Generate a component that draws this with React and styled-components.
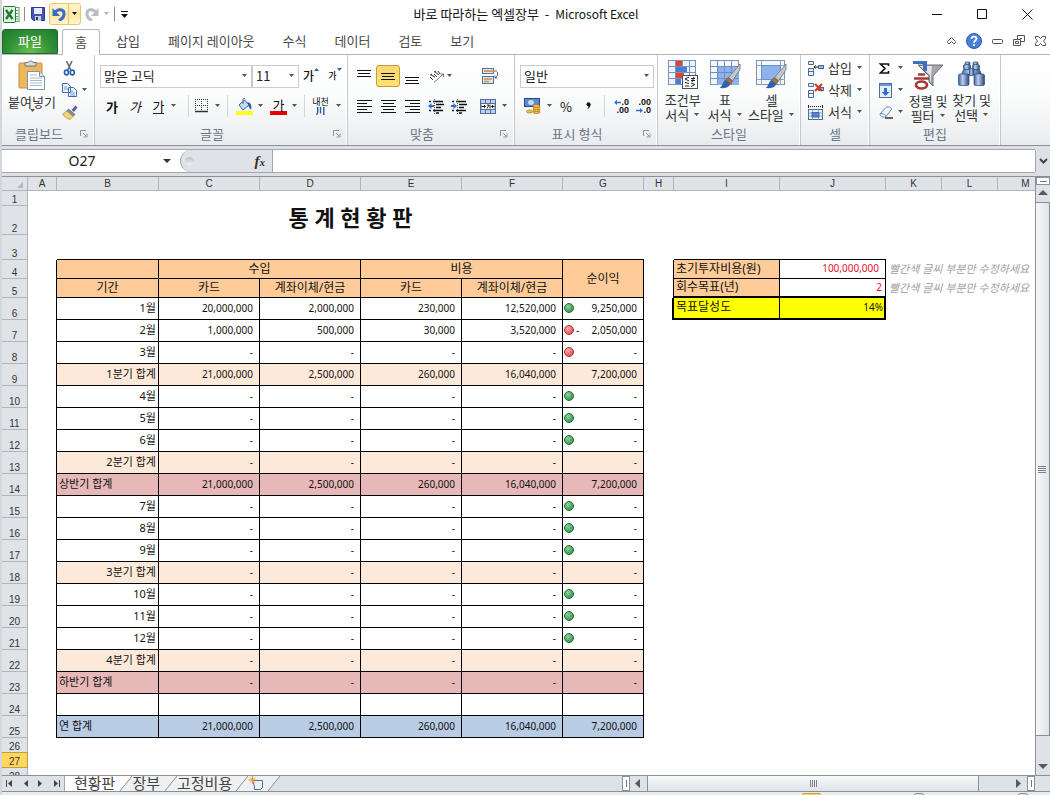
import React from "react";
import styled, { createGlobalStyle } from "styled-components";

const ui = `"Noto Sans CJK KR", "Noto Sans", sans-serif`;
const digits = `"Noto Sans", "Noto Sans CJK KR", sans-serif`;
const line = "#8b9097";
const headLine = "#b1b5ba";
const headFill = "#dfe3e8";
const orange = "#ffcc99";

const fills = {
  quarter: "#fde9d9",
  half: "#e6b8b7",
  year: "#b8cce4",
};

const GlobalStyle = createGlobalStyle`
  * {
    box-sizing: border-box;
  }

  body {
    margin: 0;
    background: #fff;
  }

  button, input, select {
    font: inherit;
    color: inherit;
    margin: 0;
    padding: 0;
    border: 0;
    background: none;
    outline: none;
  }

  svg {
    display: block;
    flex: none;
  }
`;

const Window = styled.div`
  height: 100vh;
  display: flex;
  flex-direction: column;
  overflow: hidden;
  border-left: 2px solid #d3d6db;
  font-family: ${ui};
  font-size: 13px;
  line-height: 16px;
  color: #333;
`;

/* Title bar */

const TitleBar = styled.header`
  display: grid;
  grid-template-columns: 1fr auto 1fr;
  align-items: center;
  height: 28px;
  flex: none;
`;

const Title = styled.h1`
  margin: 0;
  font-size: 13px;
  font-weight: 400;
  color: #111;
  white-space: pre;

  span {
    font-size: 12px;
  }
`;

const QuickAccess = styled.div`
  display: flex;
  align-items: center;
  gap: 4px;
  padding-left: 1px;
`;

const Divider = styled.span`
  width: 1px;
  height: 14px;
  margin-right: 2px;
  background: #8d8d8d;
`;

const PlainButton = styled.button`
  display: flex;
  align-items: center;
  gap: ${({ $gap }) => $gap || 0}px;
`;

const UndoButton = styled(PlainButton)`
  height: 22px;
  padding: 0 2px;
  border: 1px solid #e9c668;
  border-radius: 3px;
  background: linear-gradient(#fff4cf, #ffe9a3 60%, #fff6d6);
`;

const UndoSplit = styled.span`
  display: flex;
  align-items: center;
  height: 20px;
  padding-left: 2px;
  border-left: 1px solid #e9c668;
`;

const WindowButtons = styled.div`
  display: flex;
  justify-content: flex-end;

  button {
    display: flex;
    justify-content: center;
    width: 45px;
  }
`;

/* Ribbon tabs */

const TabRow = styled.nav`
  display: flex;
  height: 27px;
  flex: none;
  padding-top: 1px;
  border-bottom: 1px solid #b5b9bf;
`;

const FileTab = styled.button`
  width: 56px;
  margin-right: 4px;
  padding-bottom: 2px;
  border: 1px solid #1d6b28;
  border-radius: 3px 3px 0 0;
  background: radial-gradient(ellipse at 50% 100%, #6cc04f, #2f8f35 60%, #1f7a2d);
  color: #fff;
`;

const Tab = styled.button`
  padding: 0 14px 2px;
  color: #4a4a4a;
`;

const HomeTab = styled(Tab)`
  width: 38px;
  height: 26px;
  padding: 0 0 2px;
  border: 1px solid #b5b9bf;
  border-bottom: 0;
  border-radius: 3px 3px 0 0;
  background: #fff;
  margin: 0 2px -1px 0;
`;

const TabTools = styled.div`
  display: flex;
  align-items: center;
  gap: 10px;
  margin-left: auto;
  padding: 0 4px 2px 0;
`;

/* Ribbon */

const Ribbon = styled.div`
  display: flex;
  height: 90px;
  flex: none;
  background: linear-gradient(#fff, #fbfcfc 45%, #e9ecef);
`;

const Group = styled.section`
  display: flex;
  flex-direction: column;
  width: ${({ $w }) => $w}px;
  flex: none;
  border-right: 1px solid #c4c8cd;
  box-shadow: inset -1px 0 #fff;
`;

const GroupBody = styled.div`
  display: flex;
  flex: 1;
  padding: 0 ${({ $pad }) => $pad}px;
`;

const GroupLabel = styled.div`
  display: flex;
  align-items: center;
  gap: 10px;
  height: 20px;
  padding: 0 6px 2px;
  color: #6b7785;

  span {
    flex: 1;
    text-align: center;
  }
`;

const Rows = styled.div`
  display: flex;
  flex-direction: column;
  justify-content: center;
  gap: 8px;
  padding-top: 2px;
`;

const Row = styled.div`
  display: flex;
  align-items: center;
  height: 22px;
`;

const Tool = styled.button`
  display: flex;
  align-items: center;
  justify-content: center;
  gap: ${({ $gap }) => $gap || 5}px;
  width: ${({ $w }) => $w || 24}px;
  height: 22px;
  color: #111;
  ${({ $on }) =>
    $on &&
    `border: 1px solid #c79a3c; border-radius: 3px; background: linear-gradient(#fdd774, #ffe271);`}
`;

const Sep = styled.span`
  width: 1px;
  height: ${({ $tall }) => ($tall ? 52 : 22)}px;
  margin: 0 4px;
  align-self: center;
  background: #d3d7db;
`;

const Glyph = styled.span`
  font-size: 13px;
  line-height: 15px;
  font-weight: ${({ $bold }) => ($bold ? 700 : 400)};
  font-style: ${({ $italic }) => ($italic ? "italic" : "normal")};
  border-bottom: ${({ $under }) => ($under ? "1px solid #222" : "0")};
`;

const ColorGlyph = styled.span`
  width: 17px;
  font-size: 13px;
  line-height: 13px;
  border-bottom: 4px solid #e80000;
`;

const Hanja = styled.span`
  display: flex;
  flex-direction: column;
  align-items: center;
  font-size: 9px;
  line-height: 8px;
`;

const SizeGlyph = styled.span`
  display: flex;
  align-items: ${({ $small }) => ($small ? "center" : "flex-end")};
  font-size: ${({ $small }) => ($small ? 9 : 12)}px;
  font-weight: 500;

  svg {
    align-self: flex-start;
  }
`;

const Combo = styled.label`
  display: grid;
  align-items: center;
  width: ${({ $w }) => $w}px;
  height: 23px;
  border: 1px solid #c8ccd1;
  background: #fff;
  color: #222;

  select {
    grid-area: 1 / 1;
    appearance: none;
    width: 100%;
    height: 21px;
    padding-left: 3px;
    line-height: 20px;
  }

  svg {
    grid-area: 1 / 1;
    justify-self: end;
    margin-right: 3px;
    pointer-events: none;
  }
`;

const BigButton = styled.button`
  display: flex;
  flex-direction: column;
  align-items: center;
  width: ${({ $w }) => $w}px;
  padding-top: 5px;
  white-space: nowrap;
  line-height: 15px;

  svg + span {
    margin-top: 3px;
  }
`;

const WithArrow = styled.span`
  display: flex;
  align-items: center;
  gap: 4px;
`;

const SmallStack = styled.div`
  display: flex;
  flex-direction: column;
  padding: 2px 0 0 ${({ $l }) => $l || 0}px;
`;

const SmallButton = styled.button`
  display: flex;
  align-items: center;
  gap: ${({ $gap }) => $gap || 5}px;
  height: 22px;
  white-space: nowrap;
`;

/* Formula bar */

const FormulaBar = styled.div`
  display: flex;
  height: 32px;
  flex: none;
  padding: 4px 0 4px;
  border-top: 1px solid ${line};
  border-bottom: 1px solid ${line};
  background: #dde1e6;
`;

const NameBox = styled.div`
  display: flex;
  align-items: center;
  width: 178px;
  background: #fff;
  box-shadow: 0 -1px #a3a7ad, 0 1px #a3a7ad;

  input {
    width: 160px;
    text-align: center;
    font-family: ${digits};
    font-size: 14px;
    color: #222;
  }
`;

const FxBox = styled.div`
  display: flex;
  background: #fff;
  box-shadow: 0 -1px #a3a7ad, 0 1px #a3a7ad;
`;

const FxPill = styled.div`
  display: flex;
  align-items: center;
  justify-content: space-between;
  width: 93px;
  padding: 0 7px 0 4px;
  border: 1px solid #a3a7ad;
  border-width: 0 1px;
  border-radius: 12px 0 0 12px;
  background: #dfe2e6;

  button {
    font: italic bold 15px "Liberation Serif", serif;
    color: #333;
  }

  small {
    font-size: 11px;
  }
`;

const Knob = styled.i`
  width: 9px;
  height: 8px;
  border-radius: 50%;
  background: linear-gradient(#b9bec6, #f2f4f6);
`;

const FormulaInput = styled.input`
  flex: 1;
  min-width: 0;
  background: #fff !important;
  box-shadow: 0 -1px #a3a7ad, 0 1px #a3a7ad;
`;

const Expand = styled.button`
  display: flex;
  align-items: center;
  justify-content: center;
  width: 15px;
  border-left: 1px solid #a3a7ad;
`;

/* Sheet */

const Main = styled.main`
  display: flex;
  flex: 1;
  min-height: 0;
`;

const SheetPane = styled.div`
  flex: 1;
  min-width: 0;
  overflow: hidden;
  background: linear-gradient(to right, ${headFill} 26px, #fff 26px);
`;

const Sheet = styled.table`
  table-layout: fixed;
  width: 100%;
  border-collapse: separate;
  border-spacing: 0;
  font-family: ${digits};
  font-size: 10px;
  line-height: 14px;
  color: #111;
`;

const HeadCell = styled.th`
  height: 14px;
  padding: 0;
  border-right: 1px solid ${headLine};
  border-bottom: 1px solid ${headLine};
  background: ${headFill};
  font: 10px "Liberation Sans", sans-serif;
  line-height: 13px;
  color: #333;
`;

const Corner = styled(HeadCell)`
  svg {
    margin: 2px 4px 0 auto;
  }
`;

const RowHead = styled(HeadCell)`
  height: auto;
  vertical-align: bottom;
  line-height: 10px;
  ${({ $on }) =>
    $on && `background: #ffd75e; border-color: #c79a3c; box-shadow: 0 -1px #c79a3c;`}
`;

const Cell = styled.td`
  padding: 0 ${({ $pad }) => ($pad === undefined ? 6 : $pad)}px 2px;
  text-align: ${({ $align }) => $align || "right"};
  background: ${({ $fill }) => $fill || "#fff"};
  border: 0 solid #000;
  border-right-width: ${({ $right }) => $right || 0}px;
  border-bottom-width: ${({ $bottom }) => $bottom || 0}px;
  color: ${({ $red }) => ($red ? "#e8112d" : "inherit")};
  font-size: ${({ $size }) => $size || 10}px;
  white-space: nowrap;
`;

const BoxCell = styled(Cell).attrs({ $right: 1, $bottom: 1 })``;

const HeaderCell = styled(BoxCell)`
  padding-bottom: 0;
`;

const SheetTitle = styled(Cell)`
  font-size: 22px;
  font-weight: 700;
  line-height: 20px;
  padding-bottom: 8px;
`;

const Note = styled(Cell)`
  font-size: 11px;
  font-style: italic;
  color: #a0a0a0;
`;

const Profit = styled.div`
  display: flex;
  align-items: center;
  gap: 2px;
`;

const ProfitValue = styled.span`
  margin-left: auto;
  padding-right: 5px;
`;

const Dot = styled.i`
  width: 10px;
  height: 10px;
  border-radius: 50%;
  border: 1px solid ${({ $c }) => ($c === "red" ? "#a8323a" : "#1f6b35")};
  background: ${({ $c }) =>
    $c === "red"
      ? "radial-gradient(circle at 35% 30%, #ffb3b3, #e8585c 70%)"
      : "radial-gradient(circle at 35% 30%, #8fd3a0, #3f9e57 70%)"};
`;

/* Scroll bars and sheet tabs */

const VScroll = styled.div`
  display: flex;
  flex-direction: column;
  align-items: center;
  width: 15px;
  flex: none;
  border-left: 1px solid ${line};
  background: ${headFill};
`;

const SplitHandle = styled.i`
  flex: none;
  width: ${({ $v }) => ($v ? 8 : 14)}px;
  height: ${({ $v }) => ($v ? 15 : 8)}px;
  display: flex;
  align-items: center;
  justify-content: center;
  border: 1px solid ${line};
  background: #fff;

  &::after {
    content: "";
    width: ${({ $v }) => ($v ? 1 : 7)}px;
    height: ${({ $v }) => ($v ? 7 : 1)}px;
    background: #777;
  }
`;

const ScrollArrow = styled.button`
  display: flex;
  align-items: center;
  justify-content: center;
  width: 16px;
  height: ${({ $h }) => $h || 15}px;
`;

const VThumb = styled.div`
  display: flex;
  align-items: center;
  justify-content: center;
  flex: 1;
  width: 14px;
  margin-bottom: 22px;
  border: 1px solid ${line};
  border-left: 0;
  background: linear-gradient(to right, #f7f9fa, #dfe3e8);
`;

const BottomBar = styled.div`
  display: flex;
  height: 17px;
  flex: none;
  border-top: 1px solid ${line};
  border-bottom: 1px solid ${line};
  background: #dde2e6;
`;

const SheetNav = styled.div`
  display: flex;
  align-items: center;
  justify-content: space-around;
  width: 63px;
  border-right: 1px solid #a3a7ad;
`;

const SheetTab = styled.button`
  height: 15px;
  padding: 0 ${({ $r }) => $r || 0}px 2px ${({ $l }) => $l || 0}px;
  font-size: 15px;
  line-height: 13px;
  color: #444;
  background: ${({ $on }) => ($on ? "#fff" : "#eef0f2")};
`;

const HScroll = styled.div`
  display: flex;
  align-items: center;
  width: 413px;
  margin-left: auto;
`;

const HThumb = styled.div`
  display: flex;
  align-items: center;
  justify-content: center;
  flex: 1;
  height: 15px;
  margin: 0 32px 0 1px;
  border: 1px solid ${line};
  border-width: 0 1px;
  background: linear-gradient(#f7f9fa, #dfe3e8);
`;

const BottomCorner = styled.div`
  width: 15px;
  flex: none;
`;

const Status = styled.footer`
  display: flex;
  justify-content: flex-end;
  gap: 92px;
  height: 3px;
  flex: none;
  padding: 1px 21px 0;
  background: #e9ecef;
  overflow: hidden;
`;

const ViewMark = styled.i`
  width: ${({ $w }) => $w}px;
  height: 8px;
  border: 1px solid ${({ $on }) => ($on ? "#c79a3c" : "#7d8aa0")};
  border-radius: ${({ $on }) => ($on ? 2 : 8)}px;
  background: ${({ $on }) => ($on ? "#ffd75e" : "#dfe3e8")};
`;

/* Icons */

const Down = ({ c = "#555" }) => (
  <svg width="7" height="4" viewBox="0 0 7 4">
    <path d="M1 0h5L3.500 3z" fill={c} />
  </svg>
);

const Launcher = () => (
  <svg width="8" height="8" viewBox="0 0 8 8" fill="none" stroke="#8d949c">
    <path d="M.5 6V.5H6M3 3l3 3M7 3.500V7H3.500" />
  </svg>
);

const ExcelLogo = () => (
  <svg width="17" height="17" viewBox="0 0 17 17">
    <rect x="7" y="1.500" width="9" height="14" fill="#fff" stroke="#58a065" />
    <path d="M12 4.500h3M12 7.500h3M12 10.500h3M12 13h3" stroke="#58a065" />
    <rect x=".5" y=".5" width="12" height="16" rx="1" fill="#dff0dc" stroke="#1f7a35" />
    <path d="M3 4l6.500 9M9.500 4L3 13" stroke="#1f7a35" strokeWidth="2.400" />
  </svg>
);

const SaveIcon = () => (
  <svg width="14" height="14" viewBox="0 0 14 14">
    <path d="M.5.5h13v13h-11l-2-2z" fill="#4a55b5" stroke="#2f3a8c" />
    <rect x="3" y="1" width="8" height="6" fill="#e7edf8" />
    <rect x="4" y="9" width="6" height="5" fill="#c9cfe8" />
    <rect x="5" y="10" width="2" height="3" fill="#26307a" />
  </svg>
);

const CurlIcon = ({ c, flip }) => (
  <svg width="14" height="14" viewBox="0 0 14 14">
    <g transform={flip ? "translate(14 0) scale(-1 1)" : undefined}>
      <path d="M3 5.500C6 1 12.500 2 12 7.500 11.800 10 10 12 7 13.500" fill="none" stroke={c} strokeWidth="3" />
      <path d="M.5 1v8h7.500z" fill={c} />
    </g>
  </svg>
);

const PasteIcon = () => (
  <svg width="28" height="31" viewBox="0 0 28 31">
    <rect x="1" y="3" width="23" height="25" rx="1" fill="#eeb75d" stroke="#c98f3c" />
    <path d="M7 2.500h3C10 .5 15 .5 15 2.500h3V6H7z" fill="#d9dce0" stroke="#6f757c" />
    <path d="M9.500 11.500h12l5 5v13h-17z" fill="#fdfeff" stroke="#7f93ad" />
    <path d="M21.500 11.500v5h5" fill="#dbe5f1" stroke="#7f93ad" />
    <path d="M12 15h7M12 18h12M12 20.500h12M12 23h12M12 25.500h12" stroke="#a9bad1" />
  </svg>
);

const CutIcon = () => (
  <svg width="15" height="15" viewBox="0 0 15 15" fill="none">
    <path d="M4.500 0l4.500 9.500M10 0L5.500 9.500" stroke="#56677c" strokeWidth="1.500" />
    <ellipse cx="4.500" cy="11.500" rx="2" ry="2.300" stroke="#2b63b5" strokeWidth="1.700" />
    <ellipse cx="10.300" cy="11.500" rx="2" ry="2.300" stroke="#2b63b5" strokeWidth="1.700" />
  </svg>
);

const CopyIcon = () => (
  <svg width="15" height="14" viewBox="0 0 15 14" fill="#f2f7fd" stroke="#3b6cb0">
    <path d="M.5.5h5l3 3v6h-8zM6.500 4.500h5l3 3v6h-8z" />
    <path d="M2 4h3M2 6h4M8 8h3M8 10h5M8 12h5" stroke="#6d97d0" />
  </svg>
);

const BrushIcon = () => (
  <svg width="16" height="15" viewBox="0 0 16 15">
    <path d="M9.500 5l4-4.500L15.500 2.500 12 7z" fill="#5a5fa3" />
    <path d="M6.500 4l6.500 5.500-2 2-6.500-5z" fill="#8a8d98" stroke="#555" strokeWidth=".6" />
    <path d="M5 6l6 5.500-3 3C5 13.500 2 11.500.5 9z" fill="#f3d479" stroke="#a98335" strokeWidth=".7" />
  </svg>
);

const BordersIcon = () => (
  <svg width="14" height="14" viewBox="0 0 14 14" stroke="#333">
    <path d="M0 .5h13M0 6.500h13M.5 0v12M6.500 0v12M12.500 0v12" strokeDasharray="1 1" />
    <path d="M0 12.500h13" strokeWidth="1.500" />
  </svg>
);

const FillIcon = () => (
  <svg width="17" height="17" viewBox="0 0 17 17">
    <path d="M3 7l5.500-5L13 7l-6 5z" fill="#c9dbf3" stroke="#3c62a0" />
    <path d="M7 6V1.500C7 0 9 0 9 1.500" fill="none" stroke="#4a6a96" />
    <path d="M11 4c4 .5 5 3 4.200 7.500C13.500 11 12.500 9 12.500 7z" fill="#2b63b5" />
    <rect y="13" width="17" height="4" fill="#ffff1a" />
  </svg>
);

const lineSets = {
  top: [[0, 14], [1, 12], [0, 14]],
  left: [[0, 15], [0, 10], [0, 15], [0, 10], [0, 15]],
  center: [[0, 15], [2, 11], [0, 15], [2, 11], [0, 15]],
  right: [[0, 15], [5, 10], [0, 15], [5, 10], [0, 15]],
};

const Lines = ({ set, y = 0 }) => (
  <svg width="15" height="15" viewBox="0 0 15 15">
    {lineSets[set].map(([x, w], i) => (
      <rect key={i} x={x} y={y + i * 3} width={w} height="1" fill="#111" />
    ))}
  </svg>
);

const IndentIcon = ({ out }) => (
  <svg width="16" height="15" viewBox="0 0 16 15">
    <path d="M1 2.500h2M5 2.500h10M8 5.500h8M8 8.500h5M1 11.500h2M5 11.500h10M8 14h3" stroke="#111" strokeWidth="1.300" />
    <path d="M6.500 0v15" stroke="#555" strokeDasharray="1 1" />
    {out ? (
      <path d="M0 7l3.500-3v2H6v2H3.500v2z" fill="#2f6fd0" />
    ) : (
      <path d="M6 7L2.500 4v2H0v2h2.500v2z" fill="#2f6fd0" />
    )}
  </svg>
);

const OrientIcon = () => (
  <svg width="16" height="14" viewBox="0 0 16 14" fill="none" stroke="#333">
    <path d="M1 8l3 3M2 6l4 2M5 5l3 3M6 3l4 3M9 2l2 3M1 6l2-1M5 3l2-1" />
    <path d="M5 13.500L14.500 5M11.500 5h3v3" stroke="#777" />
  </svg>
);

const WrapIcon = () => (
  <svg width="17" height="16" viewBox="0 0 17 16" fill="none">
    <rect x=".5" y=".5" width="11" height="5" fill="#dfe9f6" stroke="#51719c" />
    <path d="M2 3h13" stroke="#c98b3c" strokeWidth="1.500" />
    <rect x=".5" y="8.500" width="11" height="7" fill="#dfe9f6" stroke="#51719c" />
    <path d="M2 11h8M2 13.500h5" stroke="#c98b3c" strokeWidth="1.500" />
    <path d="M15.500 4v3.500L13 10M13 7.500V10h2.500" stroke="#3b6cb0" />
  </svg>
);

const MergeIcon = () => (
  <svg width="16" height="15" viewBox="0 0 16 15" fill="none">
    <rect x=".5" y=".5" width="15" height="14" fill="#bcd0ec" stroke="#51719c" />
    <path d="M5.500.5v4M10.500.5v4M5.500 10.500v4M10.500 10.500v4" stroke="#51719c" />
    <rect x="1" y="4.500" width="14" height="6" fill="#fff" stroke="#51719c" />
    <path d="M1.500 7.500h4M4 6l1.500 1.500L4 9M14.500 7.500h-3M13 6l-1.500 1.500L13 9M7 6h2L7 9.500M10 5.500v4" stroke="#222" />
  </svg>
);

const MoneyIcon = () => (
  <svg width="17" height="16" viewBox="0 0 17 16">
    <rect x=".5" y=".5" width="15" height="8" fill="#5b8ad0" stroke="#23477f" />
    <ellipse cx="7" cy="4.500" rx="3" ry="2.500" fill="#c6daf5" />
    <g fill="#f5c04a" stroke="#a87416" strokeWidth=".7">
      <ellipse cx="12.500" cy="14" rx="3.500" ry="1.500" />
      <ellipse cx="12.500" cy="12" rx="3.500" ry="1.500" />
      <ellipse cx="12.500" cy="10" rx="3.500" ry="1.500" />
      <ellipse cx="12.500" cy="8" rx="3.500" ry="1.500" />
      <ellipse cx="5.500" cy="13.500" rx="3" ry="1.500" />
    </g>
  </svg>
);

const Decimals = styled.span`
  display: flex;
  flex-direction: column;
  font: bold 9px "Liberation Sans", sans-serif;
  line-height: 8px;

  span {
    display: flex;
    align-items: center;
    justify-content: flex-end;
    width: 16px;
  }
`;

const TinyArrow = ({ right }) => (
  <svg width="7" height="5" viewBox="0 0 7 5" fill="#2f6fd0">
    {right ? <path d="M7 2.500L4 0v1.700H0v1.600h4V5z" /> : <path d="M0 2.500L3 0v1.700h4v1.600H3V5z" />}
  </svg>
);

const Brush = () => (
  <g>
    <path d="M31 4L19.500 17.500l4 3.500L31 9.500z" fill="#c3c8ce" stroke="#6b7076" strokeWidth=".8" />
    <path d="M19.500 17.500l4 3.500-2 3-5-4z" fill="#a8743d" stroke="#6e4a22" strokeWidth=".6" />
    <path d="M16.500 20l5 4c-2 4-6 4.500-11 4 3-1.500 3.500-7 6-8z" fill="#2f62ae" />
  </g>
);

const CondIcon = () => (
  <svg width="31" height="29" viewBox="0 0 31 29">
    <rect x="1.500" y=".5" width="27" height="24" fill="#eef4fc" stroke="#7d93b8" />
    <path d="M8.500 1v24M15.500 1v24M22.500 1v24M2 6.500h26M2 12.500h26M2 18.500h26" stroke="#7d93b8" />
    <rect x="9" y="1" width="6" height="5" fill="#e0452b" />
    <rect x="9" y="7" width="11" height="5" fill="#4a7bd6" />
    <rect x="9" y="13" width="8" height="5" fill="#e0452b" />
    <rect x="9" y="19" width="5" height="5" fill="#4a7bd6" />
    <rect x="15.500" y="15.500" width="15" height="13" fill="#fff" stroke="#44546a" />
    <path d="M22 17l-4 2 4 2M18 22.500l4 1M24 18.500h4M24 20.500h4M27 17l-2 5M24 23l4 1.500-4 2M18 26h4" fill="none" stroke="#222" />
  </svg>
);

const TableIcon = () => (
  <svg width="32" height="29" viewBox="0 0 32 29">
    <rect x="1.500" y=".5" width="28" height="24" fill="#f4f8fd" stroke="#7d93b8" />
    <rect x="8" y="7" width="22" height="18" fill="#8db2ec" />
    <path d="M8.500 1v24M15.500 1v24M22.500 1v24M2 6.500h28M2 12.500h28M2 18.500h28" stroke="#6f8fc4" />
    <Brush />
  </svg>
);

const CellStyleIcon = () => (
  <svg width="32" height="29" viewBox="0 0 32 29">
    <rect x="1.500" y=".5" width="28" height="24" fill="#f4f8fd" stroke="#7d93b8" />
    <path d="M6.500 1v24M25.500 1v24M2 5.500h28M2 19.500h28" stroke="#8fa9d2" />
    <rect x="6.500" y="5.500" width="19" height="14" fill="#8db2ec" stroke="#6f8fc4" />
    <Brush />
  </svg>
);

const CellsIcon = ({ kind }) => (
  <svg width="17" height="15" viewBox="0 0 17 15" fill="none" stroke="#4a6a96">
    {kind === "format" ? (
      <>
        <rect x="1.500" y="4.500" width="14" height="10" fill="#eef4fc" />
        <path d="M1.500 8h14M1.500 11h14M5.500 4.500v10M11.500 4.500v10" stroke="#8fa9d2" />
        <rect x="5" y="7.500" width="7" height="4.500" fill="#5583d4" />
        <path d="M1 1.500h15M1.500 0v3M15.500 0v3" stroke="#222" strokeDasharray="1 1" />
      </>
    ) : (
      <>
        <path d="M1.500.5h5v3h-5zM1.500 7.500h5v3h-5zM1.500 10.500h5v4h-5z" fill="#eef4fc" />
        <rect x="11.500" y="4.500" width="5" height="3" fill="#9dbbe8" />
        {kind === "insert" ? (
          <path d="M11 6H7M8.500 4.500L7 6l1.500 1.500" stroke="#111" />
        ) : (
          <path d="M8 1l7 7M15 1L8 8" stroke="#d8341f" strokeWidth="2" />
        )}
      </>
    )}
  </svg>
);

const SigmaIcon = () => (
  <svg width="11" height="11" viewBox="0 0 11 11">
    <path d="M9.500 3V1H1.500L6 5.500 1.500 10h8V8" fill="none" stroke="#111" strokeWidth="1.600" />
  </svg>
);

const FillDownIcon = () => (
  <svg width="13" height="15" viewBox="0 0 13 15">
    <rect x=".5" y=".5" width="12" height="14" fill="#e6effb" stroke="#4a6fa8" />
    <rect x="1" y="1" width="11" height="2" fill="#6e96d6" />
    <path d="M5 5h3v4h2.500l-4 4-4-4H5z" fill="#2f6fd0" />
  </svg>
);

const EraserIcon = () => (
  <svg width="14" height="13" viewBox="0 0 14 13">
    <path d="M1 8l6-6.500c2-1.500 6 0 5.500 2L7 10.500c-2 1.500-6 0-6-2.500z" fill="#f1f5fb" stroke="#6c85ad" />
    <path d="M1 8c1.500-1 4.500-.5 6 2.500" fill="none" stroke="#6c85ad" />
    <path d="M6 12h8" stroke="#111" strokeWidth="1.300" />
  </svg>
);

const SortIcon = () => (
  <svg width="32" height="30" viewBox="0 0 32 30">
    <path d="M6 5h25L21 16v10l-4-4v-6z" fill="#a3a6aa" stroke="#6b6e72" />
    <path d="M8 6h12l-1 10v6l-1-1v-6z" fill="#e2e4e6" />
    <path d="M1 1h14v10h-4V4H1z" fill="#3f6fc4" />
    <path d="M6 14.500h7M2 18.500h15" stroke="#a33a3a" strokeWidth="2.400" />
    <ellipse cx="9.500" cy="25" rx="5.500" ry="3.500" fill="none" stroke="#a33a3a" strokeWidth="2.600" />
  </svg>
);

const FindIcon = () => (
  <svg width="29" height="29" viewBox="0 0 29 29">
    <defs>
      <linearGradient id="tube">
        <stop offset="0" stopColor="#365f9e" />
        <stop offset=".4" stopColor="#bcd1ef" />
        <stop offset="1" stopColor="#26467c" />
      </linearGradient>
    </defs>
    <g fill="url(#tube)" stroke="#2f4f82" strokeWidth=".7">
      <rect x="8" y="2" width="5" height="3" rx="1" />
      <rect x="16" y="2" width="5" height="3" rx="1" />
      <rect x="6.500" y="4.500" width="7" height="5" rx="1.500" />
      <rect x="15.500" y="4.500" width="7" height="5" rx="1.500" />
      <path d="M6.500 9.500h6.500v5H4.500zM16 9.500h6.500l2 5H16z" />
      <rect x="12.500" y="8.500" width="4" height="7" />
      <rect x="1.500" y="14" width="10.500" height="11.500" rx="1.500" />
      <rect x="17" y="14" width="10.500" height="11.500" rx="1.500" />
    </g>
  </svg>
);

const Grip = ({ v }) => (
  <svg width="9" height="9" viewBox="0 0 9 9" stroke="#7b8087">
    {v ? <path d="M0 1.500h8M0 3.500h8M0 5.500h8M0 7.500h8" /> : <path d="M1.500 1v7M3.500 1v7M5.500 1v7M7.500 1v7" />}
  </svg>
);

const tris = {
  up: "M0 6l5-5 5 5z",
  down: "M0 2l5 5 5-5z",
  left: "M7 0L2 4.500 7 9z",
  right: "M2 0l5 4.500L2 9z",
};

const Tri = ({ d }) => (
  <svg width="10" height="9" viewBox="0 0 10 9">
    <path d={tris[d]} fill="#555a60" />
  </svg>
);

const NavIcon = ({ left, end }) => (
  <svg width="9" height="9" viewBox="0 0 9 9" fill="#444">
    {left ? <path d="M7 1L3 4.500 7 8z" /> : <path d="M2 1l4 3.500L2 8z" />}
    {end && <rect x={left ? 1 : 7} y="1" width="1" height="7" />}
  </svg>
);

const Slash = ({ from, to }) => (
  <svg width="13" height="15" viewBox="0 0 13 15">
    <path d="M0 0h13L1 15H0z" fill={from} />
    <path d="M13 0v15H1z" fill={to} />
    <path d="M1 15L13 0" stroke="#8b9097" />
  </svg>
);

const NewSheetIcon = () => (
  <svg width="15" height="14" viewBox="0 0 15 14">
    <path d="M4.500 4.500h10v7l-2 2h-6v-3z" fill="#e9f0fa" stroke="#51719c" />
    <path d="M4.500 0v8M.5 4h8M2 1.500l5 5M7 1.500l-5 5" stroke="#e39a2d" />
  </svg>
);

/* Data */

const columns = [
  ["A", 29], ["B", 102], ["C", 101], ["D", 101], ["E", 101], ["F", 101], ["G", 81],
  ["H", 30], ["I", 106], ["J", 106], ["K", 56], ["L", 56], ["M", 56],
];

const empty = ["-", "-", "-", "-", "-"];
const firstHalf = ["21,000,000", "2,500,000", "260,000", "16,040,000", "7,200,000"];

const ledger = [
  { label: "1월", values: ["20,000,000", "2,000,000", "230,000", "12,520,000", "9,250,000"], dot: "green" },
  { label: "2월", values: ["1,000,000", "500,000", "30,000", "3,520,000", "2,050,000"], dot: "red", minus: true },
  { label: "3월", values: empty, dot: "red" },
  { label: "1분기 합계", values: firstHalf, kind: "quarter" },
  { label: "4월", values: empty, dot: "green" },
  { label: "5월", values: empty, dot: "green" },
  { label: "6월", values: empty, dot: "green" },
  { label: "2분기 합계", values: empty, kind: "quarter" },
  { label: "상반기 합계", values: firstHalf, kind: "half" },
  { label: "7월", values: empty, dot: "green" },
  { label: "8월", values: empty, dot: "green" },
  { label: "9월", values: empty, dot: "green" },
  { label: "3분기 합계", values: empty, kind: "quarter" },
  { label: "10월", values: empty, dot: "green" },
  { label: "11월", values: empty, dot: "green" },
  { label: "12월", values: empty, dot: "green" },
  { label: "4분기 합계", values: empty, kind: "quarter" },
  { label: "하반기 합계", values: empty, kind: "half" },
  { label: "", values: ["", "", "", "", ""] },
  { label: "연 합계", values: firstHalf, kind: "year" },
];

const SheetRow = styled.tr`
  height: ${({ $h }) => $h}px;
`;

const LedgerRow = ({ row, index }) => {
  const fill = fills[row.kind];
  const leftLabel = row.kind === "half" || row.kind === "year";
  return (
    <SheetRow $h={22}>
      <RowHead scope="row">{index + 6}</RowHead>
      <Cell $right={1} />
      <BoxCell $fill={fill} $size={11} $pad={2} $align={leftLabel ? "left" : "right"}>
        {row.label}
      </BoxCell>
      {row.values.slice(0, 4).map((value, i) => (
        <BoxCell key={i} $fill={fill}>
          {value}
        </BoxCell>
      ))}
      <BoxCell $fill={fill} $pad={row.dot ? 1 : 6}>
        {row.dot ? (
          <Profit>
            <Dot $c={row.dot} />
            {row.minus && <span>-</span>}
            <ProfitValue>{row.values[4]}</ProfitValue>
          </Profit>
        ) : (
          row.values[4]
        )}
      </BoxCell>
      {index === 0 ? (
        <>
          <Cell $right={2} />
          <Cell $fill="#ff0" $align="left" $pad={2} $size={12} $right={1} $bottom={2}>
            목표달성도
          </Cell>
          <Cell $fill="#ff0" $pad={1} $right={2} $bottom={2}>
            14%
          </Cell>
          <Cell colSpan={4} />
        </>
      ) : (
        <Cell colSpan={7} />
      )}
    </SheetRow>
  );
};

const BlankRow = ({ n, h, on }) => (
  <SheetRow $h={h}>
    <RowHead scope="row" $on={on}>
      {n}
    </RowHead>
    <Cell colSpan={14} />
  </SheetRow>
);

const Header = (props) => <HeaderCell $fill={orange} $align="center" $size={12} $pad={2} {...props} />;

const Spreadsheet = () => (
  <Sheet>
    <colgroup>
      <col width="26" />
      {columns.map(([name, width]) => (
        <col key={name} width={width} />
      ))}
      <col />
    </colgroup>
    <thead>
      <tr>
        <Corner>
          <svg width="7" height="7" viewBox="0 0 7 7">
            <path d="M7 1v6H1z" fill="#b4b9bf" />
          </svg>
        </Corner>
        {columns.map(([name]) => (
          <HeadCell key={name} scope="col">
            {name}
          </HeadCell>
        ))}
        <HeadCell />
      </tr>
    </thead>
    <tbody>
      <BlankRow n={1} h={15} />
      <SheetRow $h={29}>
        <RowHead scope="row">2</RowHead>
        <Cell />
        <SheetTitle colSpan={6} $align="center">
          통 계 현 황 판
        </SheetTitle>
        <Cell colSpan={7} />
      </SheetRow>
      <SheetRow $h={25}>
        <RowHead scope="row">3</RowHead>
        <Cell />
        <Cell colSpan={6} $bottom={1} />
        <Cell />
        <Cell colSpan={2} $bottom={1} />
        <Cell colSpan={4} />
      </SheetRow>
      <SheetRow $h={19}>
        <RowHead scope="row">4</RowHead>
        <Cell $right={1} />
        <Header />
        <Header colSpan={2}>수입</Header>
        <Header colSpan={2}>비용</Header>
        <Header rowSpan={2}>순이익</Header>
        <Cell $right={1} />
        <Header $align="left">초기투자비용(원)</Header>
        <BoxCell $red>100,000,000</BoxCell>
        <Note colSpan={4} $align="left" $pad={3}>
          빨간색 글씨 부분만 수정하세요
        </Note>
      </SheetRow>
      <SheetRow $h={19}>
        <RowHead scope="row">5</RowHead>
        <Cell $right={1} />
        <Header>기간</Header>
        <Header>카드</Header>
        <Header>계좌이체/현금</Header>
        <Header>카드</Header>
        <Header>계좌이체/현금</Header>
        <Cell $right={1} />
        <Cell $fill={orange} $align="left" $size={12} $pad={2} $right={1} $bottom={2}>
          회수목표(년)
        </Cell>
        <Cell $red $pad={3} $right={1} $bottom={2}>
          2
        </Cell>
        <Note colSpan={4} $align="left" $pad={3}>
          빨간색 글씨 부분만 수정하세요
        </Note>
      </SheetRow>
      {ledger.map((row, index) => (
        <LedgerRow key={index} row={row} index={index} />
      ))}
      <BlankRow n={26} h={15} />
      <BlankRow n={27} h={15} on />
      <BlankRow n={28} h={15} />
    </tbody>
  </Sheet>
);

const RibbonGroup = ({ w, label, pad = 4, launcher, children }) => (
  <Group $w={w}>
    <GroupBody $pad={pad}>{children}</GroupBody>
    <GroupLabel>
      <span>{label}</span>
      {launcher && <Launcher />}
    </GroupLabel>
  </Group>
);

const Big = ({ w, icon, top, bottom }) => (
  <BigButton $w={w}>
    {icon}
    <span>{top}</span>
    <WithArrow>
      {bottom}
      <Down />
    </WithArrow>
  </BigButton>
);

const App = () => (
  <Window>
    <GlobalStyle />
    <TitleBar>
      <QuickAccess>
        <PlainButton aria-label="Excel">
          <ExcelLogo />
        </PlainButton>
        <Divider />
        <PlainButton aria-label="저장">
          <SaveIcon />
        </PlainButton>
        <UndoButton $gap={2} aria-label="실행 취소">
          <CurlIcon c="#3a6cc0" />
          <UndoSplit>
            <Down c="#111" />
          </UndoSplit>
        </UndoButton>
        <PlainButton $gap={4} aria-label="다시 실행">
          <CurlIcon c="#b9bcc0" flip />
          <Down c="#b0b3b7" />
        </PlainButton>
        <Divider />
        <PlainButton aria-label="빠른 실행 도구 모음">
          <svg width="7" height="8" viewBox="0 0 7 8">
            <path d="M0 1.500h7" stroke="#111" />
            <path d="M0 4h7L3.500 8z" fill="#111" />
          </svg>
        </PlainButton>
      </QuickAccess>
      <Title>
        {"바로 따라하는 엑셀장부  -  "}
        <span>Microsoft Excel</span>
      </Title>
      <WindowButtons>
        <button aria-label="최소화">
          <svg width="11" height="11" viewBox="0 0 11 11">
            <path d="M0 5.500h10" stroke="#111" />
          </svg>
        </button>
        <button aria-label="최대화">
          <svg width="11" height="11" viewBox="0 0 11 11">
            <path d="M.5.5h9v9h-9z" fill="none" stroke="#111" />
          </svg>
        </button>
        <button aria-label="닫기">
          <svg width="11" height="11" viewBox="0 0 11 11">
            <path d="M.5.5l10 10M10.500.5l-10 10" stroke="#111" />
          </svg>
        </button>
      </WindowButtons>
    </TitleBar>

    <TabRow>
      <FileTab>파일</FileTab>
      <HomeTab>홈</HomeTab>
      <Tab>삽입</Tab>
      <Tab>페이지 레이아웃</Tab>
      <Tab>수식</Tab>
      <Tab>데이터</Tab>
      <Tab>검토</Tab>
      <Tab>보기</Tab>
      <TabTools>
        <PlainButton aria-label="리본 최소화">
          <svg width="9" height="8" viewBox="0 0 9 8">
            <path d="M.5 5.500v-1l4-4 4 4v1L7 7 4.500 4.500 2 7z" fill="#fff" stroke="#555" />
          </svg>
        </PlainButton>
        <PlainButton aria-label="도움말">
          <svg width="16" height="16" viewBox="0 0 16 16">
            <circle cx="8" cy="8" r="7.500" fill="#4a7fd6" stroke="#2c5ba8" />
            <path d="M5.500 6c0-3.500 5-3 5-.3C10.500 7.500 8 7.500 8 9.800M8 11v2" fill="none" stroke="#fff" strokeWidth="1.800" />
          </svg>
        </PlainButton>
        <PlainButton aria-label="창 최소화">
          <svg width="11" height="6" viewBox="0 0 11 6">
            <rect x=".5" y="1.500" width="10" height="4" rx="1" fill="#fff" stroke="#555" />
          </svg>
        </PlainButton>
        <PlainButton aria-label="창 복원">
          <svg width="12" height="11" viewBox="0 0 12 11" fill="#fff" stroke="#555">
            <path d="M4.500.5h7v6h-7zM7 3.500h2" />
            <path d="M.5 4.500h7v6h-7zM2.500 6.500h3v2h-3z" />
          </svg>
        </PlainButton>
        <PlainButton aria-label="창 닫기">
          <svg width="11" height="10" viewBox="0 0 11 10">
            <path d="M.5.5h3l2 2 2-2h3v2L8.500 5l2 2.500v2h-3l-2-2-2 2h-3v-2L2.500 5l-2-2.500z" fill="#fff" stroke="#555" />
          </svg>
        </PlainButton>
      </TabTools>
    </TabRow>

    <Ribbon>
      <RibbonGroup w={93} label="클립보드" launcher>
        <BigButton $w={52}>
          <PasteIcon />
          <span>붙여넣기</span>
          <WithArrow>
            <Down />
          </WithArrow>
        </BigButton>
        <SmallStack $l={4}>
          <SmallButton aria-label="잘라내기">
            <CutIcon />
          </SmallButton>
          <SmallButton $gap={4} aria-label="복사">
            <CopyIcon />
            <Down />
          </SmallButton>
          <SmallButton aria-label="서식 복사">
            <BrushIcon />
          </SmallButton>
        </SmallStack>
      </RibbonGroup>

      <RibbonGroup w={253} label="글꼴" pad={5} launcher>
        <Rows>
          <Row>
            <Combo $w={152}>
              <select aria-label="글꼴">
                <option>맑은 고딕</option>
              </select>
              <Down />
            </Combo>
            <Combo $w={47}>
              <select aria-label="글꼴 크기">
                <option>11</option>
              </select>
              <Down />
            </Combo>
            <Tool aria-label="글꼴 크기 크게">
              <SizeGlyph>
                가
                <svg width="5" height="4" viewBox="0 0 5 4">
                  <path d="M0 3l2.500-3L5 3z" fill="#2f5fa8" />
                </svg>
              </SizeGlyph>
            </Tool>
            <Tool aria-label="글꼴 크기 작게">
              <SizeGlyph $small>
                가
                <svg width="5" height="4" viewBox="0 0 5 4">
                  <path d="M0 0l2.500 3L5 0z" fill="#2f5fa8" />
                </svg>
              </SizeGlyph>
            </Tool>
          </Row>
          <Row>
            <Tool aria-label="굵게">
              <Glyph $bold>가</Glyph>
            </Tool>
            <Tool $w={22} aria-label="기울임꼴">
              <Glyph $italic>가</Glyph>
            </Tool>
            <Tool $w={38} $gap={6} aria-label="밑줄">
              <Glyph $under>가</Glyph>
              <Down />
            </Tool>
            <Sep />
            <Tool $w={30} aria-label="테두리">
              <BordersIcon />
              <Down />
            </Tool>
            <Sep />
            <Tool $w={36} $gap={4} aria-label="채우기 색">
              <FillIcon />
              <Down />
            </Tool>
            <Tool $w={32} $gap={4} aria-label="글꼴 색">
              <ColorGlyph>가</ColorGlyph>
              <Down />
            </Tool>
            <Sep />
            <Tool $w={36} $gap={6} aria-label="윗주">
              <Hanja>
                내천
                <svg width="9" height="9" viewBox="0 0 9 9" fill="none" stroke="#2c5aa0" strokeWidth="1.400">
                  <path d="M1.700 1v4c0 2-.4 3-1.200 4M4.500 1v6.500M7.800 1v8" />
                </svg>
              </Hanja>
              <Down />
            </Tool>
          </Row>
        </Rows>
      </RibbonGroup>

      <RibbonGroup w={167} label="맞춤" launcher>
        <Rows>
          <Row>
            <Tool aria-label="위쪽 맞춤">
              <Lines set="top" y={1} />
            </Tool>
            <Tool $on aria-label="가운데 맞춤">
              <Lines set="top" y={4} />
            </Tool>
            <Tool aria-label="아래쪽 맞춤">
              <Lines set="top" y={8} />
            </Tool>
            <Tool $w={34} $gap={1} aria-label="방향">
              <OrientIcon />
              <Down />
            </Tool>
          </Row>
          <Row>
            <Tool aria-label="왼쪽 맞춤">
              <Lines set="left" y={1} />
            </Tool>
            <Tool aria-label="가로 가운데 맞춤">
              <Lines set="center" y={1} />
            </Tool>
            <Tool aria-label="오른쪽 맞춤">
              <Lines set="right" y={1} />
            </Tool>
            <Tool aria-label="내어쓰기">
              <IndentIcon out />
            </Tool>
            <Tool $w={22} aria-label="들여쓰기">
              <IndentIcon />
            </Tool>
          </Row>
        </Rows>
        <Sep $tall />
        <Rows>
          <Row>
            <Tool aria-label="텍스트 줄 바꿈">
              <WrapIcon />
            </Tool>
          </Row>
          <Row>
            <Tool $w={32} aria-label="병합하고 가운데 맞춤">
              <MergeIcon />
              <Down />
            </Tool>
          </Row>
        </Rows>
      </RibbonGroup>

      <RibbonGroup w={143} label="표시 형식" pad={5} launcher>
        <Rows>
          <Row>
            <Combo $w={134}>
              <select aria-label="표시 형식">
                <option>일반</option>
              </select>
              <Down />
            </Combo>
          </Row>
          <Row>
            <Tool $w={36} aria-label="회계 표시 형식">
              <MoneyIcon />
              <Down />
            </Tool>
            <Tool $w={20}>
              <Glyph>%</Glyph>
            </Tool>
            <Tool aria-label="쉼표 스타일">
              <svg width="5" height="8" viewBox="0 0 5 8">
                <circle cx="2.500" cy="2.300" r="2" fill="#111" />
                <path d="M4.500 2.300C4.500 5 3 6.500 1 7.500 2.300 6 2.600 5 2.300 3z" fill="#111" />
              </svg>
            </Tool>
            <Sep />
            <Tool aria-label="자릿수 늘림">
              <Decimals>
                <span>
                  <TinyArrow />
                  .0
                </span>
                <span>.00</span>
              </Decimals>
            </Tool>
            <Tool $w={20} aria-label="자릿수 줄임">
              <Decimals>
                <span>.00</span>
                <span>
                  <TinyArrow right />
                  .0
                </span>
              </Decimals>
            </Tool>
          </Row>
        </Rows>
      </RibbonGroup>

      <RibbonGroup w={143} label="스타일" pad={3}>
        <Big w={44} icon={<CondIcon />} top="조건부" bottom="서식" />
        <Big w={42} icon={<TableIcon />} top="표" bottom="서식" />
        <Big w={52} icon={<CellStyleIcon />} top="셀" bottom="스타일" />
      </RibbonGroup>

      <RibbonGroup w={69} label="셀" pad={6}>
        <SmallStack>
          <SmallButton $gap={4}>
            <CellsIcon kind="insert" />
            삽입
            <Down />
          </SmallButton>
          <SmallButton $gap={4}>
            <CellsIcon kind="delete" />
            삭제
            <Down />
          </SmallButton>
          <SmallButton $gap={4}>
            <CellsIcon kind="format" />
            서식
            <Down />
          </SmallButton>
        </SmallStack>
      </RibbonGroup>

      <RibbonGroup w={131} label="편집" pad={9}>
        <SmallStack>
          <SmallButton $gap={7} aria-label="합계">
            <SigmaIcon />
            <Down />
          </SmallButton>
          <SmallButton aria-label="채우기">
            <FillDownIcon />
            <Down />
          </SmallButton>
          <SmallButton $gap={4} aria-label="지우기">
            <EraserIcon />
            <Down />
          </SmallButton>
        </SmallStack>
        <Big w={50} icon={<SortIcon />} top="정렬 및" bottom="필터" />
        <Big w={40} icon={<FindIcon />} top="찾기 및" bottom="선택" />
      </RibbonGroup>
    </Ribbon>

    <FormulaBar>
      <NameBox>
        <input aria-label="이름 상자" defaultValue="O27" />
        <PlainButton aria-label="이름 목록">
          <svg width="9" height="5" viewBox="0 0 9 5">
            <path d="M1 0h8L5 4z" fill="#333" />
          </svg>
        </PlainButton>
      </NameBox>
      <FxBox>
        <FxPill>
          <Knob />
          <button aria-label="함수 삽입">
            f<small>x</small>
          </button>
        </FxPill>
      </FxBox>
      <FormulaInput aria-label="수식 입력줄" />
      <Expand aria-label="수식 입력줄 확장">
        <svg width="9" height="6" viewBox="0 0 9 6">
          <path d="M1 1l3.500 3.500L8 1" fill="none" stroke="#444" strokeWidth="2" />
        </svg>
      </Expand>
    </FormulaBar>

    <Main>
      <SheetPane>
        <Spreadsheet />
      </SheetPane>
      <VScroll>
        <SplitHandle />
        <ScrollArrow $h={17} aria-label="위로">
          <Tri d="up" />
        </ScrollArrow>
        <VThumb>
          <Grip v />
        </VThumb>
        <ScrollArrow $h={17} aria-label="아래로">
          <Tri d="down" />
        </ScrollArrow>
      </VScroll>
    </Main>

    <BottomBar>
      <SheetNav>
        <PlainButton aria-label="첫 시트">
          <NavIcon left end />
        </PlainButton>
        <PlainButton aria-label="이전 시트">
          <NavIcon left />
        </PlainButton>
        <PlainButton aria-label="다음 시트">
          <NavIcon />
        </PlainButton>
        <PlainButton aria-label="마지막 시트">
          <NavIcon end />
        </PlainButton>
      </SheetNav>
      <SheetTab $on $l={9} $r={4}>
        현황판
      </SheetTab>
      <Slash from="#fff" to="#eef0f2" />
      <SheetTab $r={4}>장부</SheetTab>
      <Slash from="#eef0f2" to="#eef0f2" />
      <SheetTab $r={3}>고정비용</SheetTab>
      <Slash from="#eef0f2" to="#eef0f2" />
      <SheetTab $r={4} aria-label="시트 삽입">
        <NewSheetIcon />
      </SheetTab>
      <Slash from="#eef0f2" to="#dde2e6" />
      <HScroll>
        <SplitHandle $v />
        <ScrollArrow aria-label="왼쪽으로">
          <Tri d="left" />
        </ScrollArrow>
        <HThumb>
          <Grip />
        </HThumb>
        <ScrollArrow aria-label="오른쪽으로">
          <Tri d="right" />
        </ScrollArrow>
        <SplitHandle $v />
      </HScroll>
      <BottomCorner />
    </BottomBar>
    <Status>
      <ViewMark $on $w={19} />
      <ViewMark $w={12} />
      <ViewMark $w={12} />
    </Status>
  </Window>
);

export default App;
